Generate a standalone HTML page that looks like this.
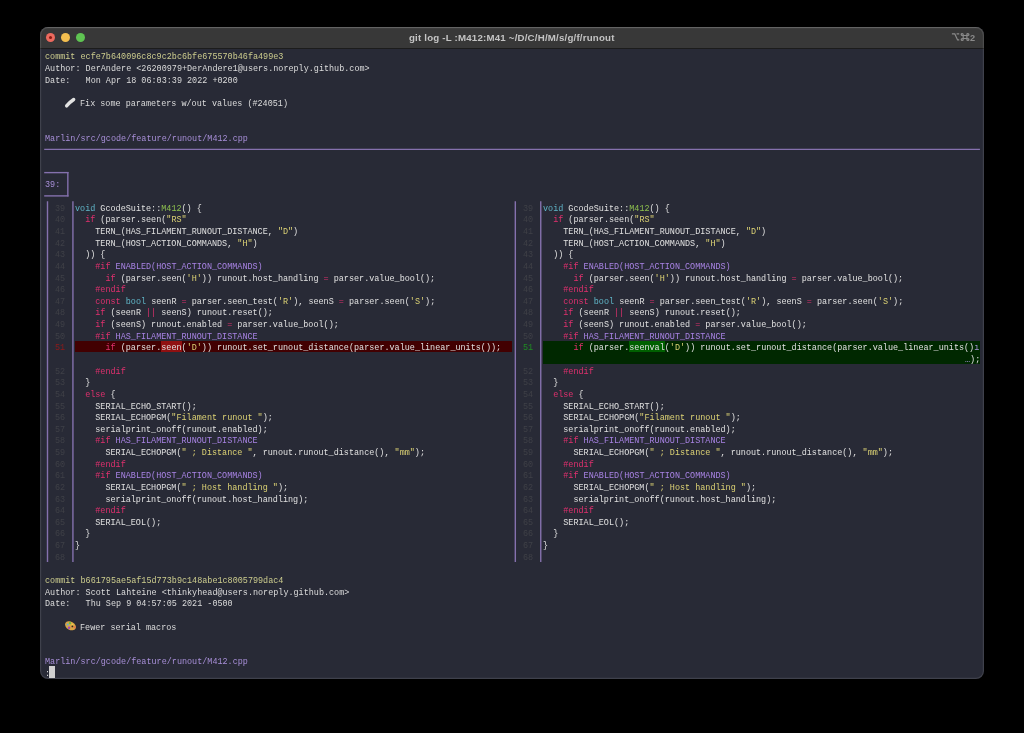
<!DOCTYPE html>
<html><head><meta charset="utf-8"><style>
html,body{margin:0;padding:0;background:#000;width:1024px;height:733px;overflow:hidden}
#win{position:absolute;left:40.4px;top:27.3px;width:943.6px;height:651.9px;border-radius:8px;background:#282a36;overflow:hidden}
#frame{position:absolute;left:40.4px;top:27.3px;width:943.6px;height:651.9px;border-radius:8px;box-shadow:inset 0 0 0 1.2px rgba(255,255,255,0.11)}
#tb{position:absolute;left:0;top:0;right:0;height:20.4px;background:#383838;border-bottom:1px solid #1c1c1c;box-shadow:inset 0 1px 0 rgba(255,255,255,0.12)}
.dot{position:absolute;top:5.9px;width:9px;height:9px;border-radius:50%}
#ttl{position:absolute;will-change:transform;left:0;right:0;top:3.6px;text-align:center;font:bold 9.7px "Liberation Sans",sans-serif;letter-spacing:0.2px;color:#c4c4c4;line-height:14px}
#sc{position:absolute;will-change:transform;right:8px;top:3px;font:bold 9px "Liberation Sans",sans-serif;color:#8c8c8c;line-height:14px}
.r{position:absolute;transform:scaleX(0.85593);transform-origin:0 0;white-space:pre;font-family:"Liberation Mono",monospace;font-size:9.9px;line-height:11.635px;height:11.635px;color:#dcdcdc}
.b{position:absolute}
</style></head><body>

<div id="win"><div id="tb">
<div class="dot" style="left:5.7px;background:#ec6a5e"><div style="position:absolute;left:3px;top:3px;width:3px;height:3px;border-radius:50%;background:#8c1a10"></div></div>
<div class="dot" style="left:20.4px;background:#f4bf4f"></div>
<div class="dot" style="left:35.4px;background:#5fc452"></div>
<div id="ttl">git log -L :M412:M41 ~/D/C/H/M/s/g/f/runout</div>
<svg style="position:absolute;left:910.9px;top:5px" width="26" height="10" viewBox="0 0 26 10"><g stroke="#8a8a8a" stroke-width="1.2" fill="none" stroke-linecap="butt"><path d="M0.9 1.9H3.8L6.6 7.9H8.2M5.6 1.9H8.2"/><path d="M12.2 3.5H15.9V6.5H12.2Z"/><circle cx="11.2" cy="2.5" r="1.0"/><circle cx="16.9" cy="2.5" r="1.0"/><circle cx="11.2" cy="7.5" r="1.0"/><circle cx="16.9" cy="7.5" r="1.0"/></g><text x="19.0" y="8.6" font-family="Liberation Sans" font-weight="bold" font-size="9.2" fill="#8a8a8a">2</text></svg>
</div></div>
<div class="b" style="left:74.81px;top:340.82px;width:437.31px;height:11.63px;background:#420001"></div>
<div class="b" style="left:161.25px;top:340.82px;width:20.34px;height:11.63px;background:#901011"></div>
<div class="b" style="left:542.63px;top:340.82px;width:437.31px;height:23.27px;background:#002800"></div>
<div class="b" style="left:629.07px;top:340.82px;width:35.59px;height:11.63px;background:#006000"></div>
<svg class="b" style="left:0;top:0" width="1024" height="733"><line x1="44.20" y1="149.35" x2="979.94" y2="149.35" stroke="#8571ae" stroke-width="1.40"/><line x1="44.20" y1="172.62" x2="68.54" y2="172.62" stroke="#8571ae" stroke-width="1.40"/><line x1="44.20" y1="195.89" x2="68.54" y2="195.89" stroke="#8571ae" stroke-width="1.40"/><line x1="67.84" y1="171.92" x2="67.84" y2="196.59" stroke="#8571ae" stroke-width="1.40"/><line x1="47.50" y1="201.20" x2="47.50" y2="561.89" stroke="#8571ae" stroke-width="1.40"/><line x1="72.92" y1="201.20" x2="72.92" y2="561.89" stroke="#8571ae" stroke-width="1.40"/><line x1="515.32" y1="201.20" x2="515.32" y2="561.89" stroke="#8571ae" stroke-width="1.40"/><line x1="540.75" y1="201.20" x2="540.75" y2="561.89" stroke="#8571ae" stroke-width="1.40"/></svg>
<div style="position:absolute;left:0;top:0;width:1024px;height:733px;will-change:transform">
<div class="r" style="left:44.70px;top:51.45px"><span style="color:#cdcd8e">commit ecfe7b640096c8c9c2bc6bfe675570b46fa499e3</span></div>
<div class="r" style="left:44.70px;top:63.09px">Author: DerAndere &lt;26200979+DerAndere1@users.noreply.github.com&gt;</div>
<div class="r" style="left:44.70px;top:74.72px">Date:   Mon Apr 18 06:03:39 2022 +0200</div>
<div class="r" style="left:80.30px;top:97.99px">Fix some parameters w/out values (#24051)</div>
<div class="r" style="left:44.70px;top:132.89px"><span style="color:#a88fd8">Marlin/src/gcode/feature/runout/M412.cpp</span></div>
<div class="r" style="left:44.70px;top:179.44px"><span style="color:#a88fd8">39:</span></div>
<div class="r" style="left:44.70px;top:575.03px"><span style="color:#cdcd8e">commit b661795ae5af15d773b9c148abe1c8005799dac4</span></div>
<div class="r" style="left:44.70px;top:586.66px">Author: Scott Lahteine &lt;thinkyhead@users.noreply.github.com&gt;</div>
<div class="r" style="left:44.70px;top:598.30px">Date:   Thu Sep 9 04:57:05 2021 -0500</div>
<div class="r" style="left:80.30px;top:621.57px">Fewer serial macros</div>
<div class="r" style="left:44.70px;top:656.47px"><span style="color:#a88fd8">Marlin/src/gcode/feature/runout/M412.cpp</span></div>
<div class="r" style="left:44.70px;top:668.11px">:</div>
<div class="r" style="left:54.87px;top:202.70px"><span style="color:#3f4047">39</span></div>
<div class="r" style="left:522.69px;top:202.70px"><span style="color:#3f4047">39</span></div>
<div class="r" style="left:75.21px;top:202.70px"><span style="color:#5fb4c6">void</span><span style="color:#e0e0e0"> GcodeSuite::</span><span style="color:#8ec04e">M412</span><span style="color:#e0e0e0">() {</span></div>
<div class="r" style="left:543.03px;top:202.70px"><span style="color:#5fb4c6">void</span><span style="color:#e0e0e0"> GcodeSuite::</span><span style="color:#8ec04e">M412</span><span style="color:#e0e0e0">() {</span></div>
<div class="r" style="left:54.87px;top:214.34px"><span style="color:#3f4047">40</span></div>
<div class="r" style="left:522.69px;top:214.34px"><span style="color:#3f4047">40</span></div>
<div class="r" style="left:75.21px;top:214.34px"><span style="color:#e0e0e0">  </span><span style="color:#e0306e">if</span><span style="color:#e0e0e0"> (parser.seen(</span><span style="color:#dcd274">&quot;RS&quot;</span></div>
<div class="r" style="left:543.03px;top:214.34px"><span style="color:#e0e0e0">  </span><span style="color:#e0306e">if</span><span style="color:#e0e0e0"> (parser.seen(</span><span style="color:#dcd274">&quot;RS&quot;</span></div>
<div class="r" style="left:54.87px;top:225.98px"><span style="color:#3f4047">41</span></div>
<div class="r" style="left:522.69px;top:225.98px"><span style="color:#3f4047">41</span></div>
<div class="r" style="left:75.21px;top:225.98px"><span style="color:#e0e0e0">    TERN_(HAS_FILAMENT_RUNOUT_DISTANCE, </span><span style="color:#dcd274">&quot;D&quot;</span><span style="color:#e0e0e0">)</span></div>
<div class="r" style="left:543.03px;top:225.98px"><span style="color:#e0e0e0">    TERN_(HAS_FILAMENT_RUNOUT_DISTANCE, </span><span style="color:#dcd274">&quot;D&quot;</span><span style="color:#e0e0e0">)</span></div>
<div class="r" style="left:54.87px;top:237.61px"><span style="color:#3f4047">42</span></div>
<div class="r" style="left:522.69px;top:237.61px"><span style="color:#3f4047">42</span></div>
<div class="r" style="left:75.21px;top:237.61px"><span style="color:#e0e0e0">    TERN_(HOST_ACTION_COMMANDS, </span><span style="color:#dcd274">&quot;H&quot;</span><span style="color:#e0e0e0">)</span></div>
<div class="r" style="left:543.03px;top:237.61px"><span style="color:#e0e0e0">    TERN_(HOST_ACTION_COMMANDS, </span><span style="color:#dcd274">&quot;H&quot;</span><span style="color:#e0e0e0">)</span></div>
<div class="r" style="left:54.87px;top:249.25px"><span style="color:#3f4047">43</span></div>
<div class="r" style="left:522.69px;top:249.25px"><span style="color:#3f4047">43</span></div>
<div class="r" style="left:75.21px;top:249.25px"><span style="color:#e0e0e0">  )) {</span></div>
<div class="r" style="left:543.03px;top:249.25px"><span style="color:#e0e0e0">  )) {</span></div>
<div class="r" style="left:54.87px;top:260.88px"><span style="color:#3f4047">44</span></div>
<div class="r" style="left:522.69px;top:260.88px"><span style="color:#3f4047">44</span></div>
<div class="r" style="left:75.21px;top:260.88px"><span style="color:#e0e0e0">    </span><span style="color:#e0306e">#if</span><span style="color:#a883e4"> ENABLED(HOST_ACTION_COMMANDS)</span></div>
<div class="r" style="left:543.03px;top:260.88px"><span style="color:#e0e0e0">    </span><span style="color:#e0306e">#if</span><span style="color:#a883e4"> ENABLED(HOST_ACTION_COMMANDS)</span></div>
<div class="r" style="left:54.87px;top:272.51px"><span style="color:#3f4047">45</span></div>
<div class="r" style="left:522.69px;top:272.51px"><span style="color:#3f4047">45</span></div>
<div class="r" style="left:75.21px;top:272.51px"><span style="color:#e0e0e0">      </span><span style="color:#e0306e">if</span><span style="color:#e0e0e0"> (parser.seen(</span><span style="color:#dcd274">&#x27;H&#x27;</span><span style="color:#e0e0e0">)) runout.host_handling </span><span style="color:#e0306e">=</span><span style="color:#e0e0e0"> parser.value_bool();</span></div>
<div class="r" style="left:543.03px;top:272.51px"><span style="color:#e0e0e0">      </span><span style="color:#e0306e">if</span><span style="color:#e0e0e0"> (parser.seen(</span><span style="color:#dcd274">&#x27;H&#x27;</span><span style="color:#e0e0e0">)) runout.host_handling </span><span style="color:#e0306e">=</span><span style="color:#e0e0e0"> parser.value_bool();</span></div>
<div class="r" style="left:54.87px;top:284.15px"><span style="color:#3f4047">46</span></div>
<div class="r" style="left:522.69px;top:284.15px"><span style="color:#3f4047">46</span></div>
<div class="r" style="left:75.21px;top:284.15px"><span style="color:#e0e0e0">    </span><span style="color:#e0306e">#endif</span></div>
<div class="r" style="left:543.03px;top:284.15px"><span style="color:#e0e0e0">    </span><span style="color:#e0306e">#endif</span></div>
<div class="r" style="left:54.87px;top:295.79px"><span style="color:#3f4047">47</span></div>
<div class="r" style="left:522.69px;top:295.79px"><span style="color:#3f4047">47</span></div>
<div class="r" style="left:75.21px;top:295.79px"><span style="color:#e0e0e0">    </span><span style="color:#e0306e">const</span><span style="color:#e0e0e0"> </span><span style="color:#5fb4c6">bool</span><span style="color:#e0e0e0"> seenR </span><span style="color:#e0306e">=</span><span style="color:#e0e0e0"> parser.seen_test(</span><span style="color:#dcd274">&#x27;R&#x27;</span><span style="color:#e0e0e0">), seenS </span><span style="color:#e0306e">=</span><span style="color:#e0e0e0"> parser.seen(</span><span style="color:#dcd274">&#x27;S&#x27;</span><span style="color:#e0e0e0">);</span></div>
<div class="r" style="left:543.03px;top:295.79px"><span style="color:#e0e0e0">    </span><span style="color:#e0306e">const</span><span style="color:#e0e0e0"> </span><span style="color:#5fb4c6">bool</span><span style="color:#e0e0e0"> seenR </span><span style="color:#e0306e">=</span><span style="color:#e0e0e0"> parser.seen_test(</span><span style="color:#dcd274">&#x27;R&#x27;</span><span style="color:#e0e0e0">), seenS </span><span style="color:#e0306e">=</span><span style="color:#e0e0e0"> parser.seen(</span><span style="color:#dcd274">&#x27;S&#x27;</span><span style="color:#e0e0e0">);</span></div>
<div class="r" style="left:54.87px;top:307.42px"><span style="color:#3f4047">48</span></div>
<div class="r" style="left:522.69px;top:307.42px"><span style="color:#3f4047">48</span></div>
<div class="r" style="left:75.21px;top:307.42px"><span style="color:#e0e0e0">    </span><span style="color:#e0306e">if</span><span style="color:#e0e0e0"> (seenR </span><span style="color:#e0306e">||</span><span style="color:#e0e0e0"> seenS) runout.reset();</span></div>
<div class="r" style="left:543.03px;top:307.42px"><span style="color:#e0e0e0">    </span><span style="color:#e0306e">if</span><span style="color:#e0e0e0"> (seenR </span><span style="color:#e0306e">||</span><span style="color:#e0e0e0"> seenS) runout.reset();</span></div>
<div class="r" style="left:54.87px;top:319.06px"><span style="color:#3f4047">49</span></div>
<div class="r" style="left:522.69px;top:319.06px"><span style="color:#3f4047">49</span></div>
<div class="r" style="left:75.21px;top:319.06px"><span style="color:#e0e0e0">    </span><span style="color:#e0306e">if</span><span style="color:#e0e0e0"> (seenS) runout.enabled </span><span style="color:#e0306e">=</span><span style="color:#e0e0e0"> parser.value_bool();</span></div>
<div class="r" style="left:543.03px;top:319.06px"><span style="color:#e0e0e0">    </span><span style="color:#e0306e">if</span><span style="color:#e0e0e0"> (seenS) runout.enabled </span><span style="color:#e0306e">=</span><span style="color:#e0e0e0"> parser.value_bool();</span></div>
<div class="r" style="left:54.87px;top:330.69px"><span style="color:#3f4047">50</span></div>
<div class="r" style="left:522.69px;top:330.69px"><span style="color:#3f4047">50</span></div>
<div class="r" style="left:75.21px;top:330.69px"><span style="color:#e0e0e0">    </span><span style="color:#e0306e">#if</span><span style="color:#a883e4"> HAS_FILAMENT_RUNOUT_DISTANCE</span></div>
<div class="r" style="left:543.03px;top:330.69px"><span style="color:#e0e0e0">    </span><span style="color:#e0306e">#if</span><span style="color:#a883e4"> HAS_FILAMENT_RUNOUT_DISTANCE</span></div>
<div class="r" style="left:54.87px;top:342.32px"><span style="color:#8f1a1a">51</span></div>
<div class="r" style="left:522.69px;top:342.32px"><span style="color:#1f8c22">51</span></div>
<div class="r" style="left:75.21px;top:342.32px"><span style="color:#e0e0e0">      </span><span style="color:#e0306e">if</span><span style="color:#e0e0e0"> (parser.</span><span style="color:#e0e0e0">seen</span><span style="color:#e0e0e0">(</span><span style="color:#dcd274">&#x27;D&#x27;</span><span style="color:#e0e0e0">)) runout.set_runout_distance(parser.value_linear_units());</span></div>
<div class="r" style="left:543.03px;top:342.32px"><span style="color:#e0e0e0">      </span><span style="color:#e0306e">if</span><span style="color:#e0e0e0"> (parser.</span><span style="color:#e0e0e0">seenval</span><span style="color:#e0e0e0">(</span><span style="color:#dcd274">&#x27;D&#x27;</span><span style="color:#e0e0e0">)) runout.set_runout_distance(parser.value_linear_units()</span><span style="color:#a596d6">ı</span></div>
<div class="r" style="left:965.08px;top:353.96px"><span style="color:#a596d6">…</span><span style="color:#e0e0e0">);</span></div>
<div class="r" style="left:54.87px;top:365.59px"><span style="color:#3f4047">52</span></div>
<div class="r" style="left:522.69px;top:365.59px"><span style="color:#3f4047">52</span></div>
<div class="r" style="left:75.21px;top:365.59px"><span style="color:#e0e0e0">    </span><span style="color:#e0306e">#endif</span></div>
<div class="r" style="left:543.03px;top:365.59px"><span style="color:#e0e0e0">    </span><span style="color:#e0306e">#endif</span></div>
<div class="r" style="left:54.87px;top:377.23px"><span style="color:#3f4047">53</span></div>
<div class="r" style="left:522.69px;top:377.23px"><span style="color:#3f4047">53</span></div>
<div class="r" style="left:75.21px;top:377.23px"><span style="color:#e0e0e0">  }</span></div>
<div class="r" style="left:543.03px;top:377.23px"><span style="color:#e0e0e0">  }</span></div>
<div class="r" style="left:54.87px;top:388.87px"><span style="color:#3f4047">54</span></div>
<div class="r" style="left:522.69px;top:388.87px"><span style="color:#3f4047">54</span></div>
<div class="r" style="left:75.21px;top:388.87px"><span style="color:#e0e0e0">  </span><span style="color:#e0306e">else</span><span style="color:#e0e0e0"> {</span></div>
<div class="r" style="left:543.03px;top:388.87px"><span style="color:#e0e0e0">  </span><span style="color:#e0306e">else</span><span style="color:#e0e0e0"> {</span></div>
<div class="r" style="left:54.87px;top:400.50px"><span style="color:#3f4047">55</span></div>
<div class="r" style="left:522.69px;top:400.50px"><span style="color:#3f4047">55</span></div>
<div class="r" style="left:75.21px;top:400.50px"><span style="color:#e0e0e0">    SERIAL_ECHO_START();</span></div>
<div class="r" style="left:543.03px;top:400.50px"><span style="color:#e0e0e0">    SERIAL_ECHO_START();</span></div>
<div class="r" style="left:54.87px;top:412.13px"><span style="color:#3f4047">56</span></div>
<div class="r" style="left:522.69px;top:412.13px"><span style="color:#3f4047">56</span></div>
<div class="r" style="left:75.21px;top:412.13px"><span style="color:#e0e0e0">    SERIAL_ECHOPGM(</span><span style="color:#dcd274">&quot;Filament runout &quot;</span><span style="color:#e0e0e0">);</span></div>
<div class="r" style="left:543.03px;top:412.13px"><span style="color:#e0e0e0">    SERIAL_ECHOPGM(</span><span style="color:#dcd274">&quot;Filament runout &quot;</span><span style="color:#e0e0e0">);</span></div>
<div class="r" style="left:54.87px;top:423.77px"><span style="color:#3f4047">57</span></div>
<div class="r" style="left:522.69px;top:423.77px"><span style="color:#3f4047">57</span></div>
<div class="r" style="left:75.21px;top:423.77px"><span style="color:#e0e0e0">    serialprint_onoff(runout.enabled);</span></div>
<div class="r" style="left:543.03px;top:423.77px"><span style="color:#e0e0e0">    serialprint_onoff(runout.enabled);</span></div>
<div class="r" style="left:54.87px;top:435.40px"><span style="color:#3f4047">58</span></div>
<div class="r" style="left:522.69px;top:435.40px"><span style="color:#3f4047">58</span></div>
<div class="r" style="left:75.21px;top:435.40px"><span style="color:#e0e0e0">    </span><span style="color:#e0306e">#if</span><span style="color:#a883e4"> HAS_FILAMENT_RUNOUT_DISTANCE</span></div>
<div class="r" style="left:543.03px;top:435.40px"><span style="color:#e0e0e0">    </span><span style="color:#e0306e">#if</span><span style="color:#a883e4"> HAS_FILAMENT_RUNOUT_DISTANCE</span></div>
<div class="r" style="left:54.87px;top:447.04px"><span style="color:#3f4047">59</span></div>
<div class="r" style="left:522.69px;top:447.04px"><span style="color:#3f4047">59</span></div>
<div class="r" style="left:75.21px;top:447.04px"><span style="color:#e0e0e0">      SERIAL_ECHOPGM(</span><span style="color:#dcd274">&quot; ; Distance &quot;</span><span style="color:#e0e0e0">, runout.runout_distance(), </span><span style="color:#dcd274">&quot;mm&quot;</span><span style="color:#e0e0e0">);</span></div>
<div class="r" style="left:543.03px;top:447.04px"><span style="color:#e0e0e0">      SERIAL_ECHOPGM(</span><span style="color:#dcd274">&quot; ; Distance &quot;</span><span style="color:#e0e0e0">, runout.runout_distance(), </span><span style="color:#dcd274">&quot;mm&quot;</span><span style="color:#e0e0e0">);</span></div>
<div class="r" style="left:54.87px;top:458.67px"><span style="color:#3f4047">60</span></div>
<div class="r" style="left:522.69px;top:458.67px"><span style="color:#3f4047">60</span></div>
<div class="r" style="left:75.21px;top:458.67px"><span style="color:#e0e0e0">    </span><span style="color:#e0306e">#endif</span></div>
<div class="r" style="left:543.03px;top:458.67px"><span style="color:#e0e0e0">    </span><span style="color:#e0306e">#endif</span></div>
<div class="r" style="left:54.87px;top:470.31px"><span style="color:#3f4047">61</span></div>
<div class="r" style="left:522.69px;top:470.31px"><span style="color:#3f4047">61</span></div>
<div class="r" style="left:75.21px;top:470.31px"><span style="color:#e0e0e0">    </span><span style="color:#e0306e">#if</span><span style="color:#a883e4"> ENABLED(HOST_ACTION_COMMANDS)</span></div>
<div class="r" style="left:543.03px;top:470.31px"><span style="color:#e0e0e0">    </span><span style="color:#e0306e">#if</span><span style="color:#a883e4"> ENABLED(HOST_ACTION_COMMANDS)</span></div>
<div class="r" style="left:54.87px;top:481.94px"><span style="color:#3f4047">62</span></div>
<div class="r" style="left:522.69px;top:481.94px"><span style="color:#3f4047">62</span></div>
<div class="r" style="left:75.21px;top:481.94px"><span style="color:#e0e0e0">      SERIAL_ECHOPGM(</span><span style="color:#dcd274">&quot; ; Host handling &quot;</span><span style="color:#e0e0e0">);</span></div>
<div class="r" style="left:543.03px;top:481.94px"><span style="color:#e0e0e0">      SERIAL_ECHOPGM(</span><span style="color:#dcd274">&quot; ; Host handling &quot;</span><span style="color:#e0e0e0">);</span></div>
<div class="r" style="left:54.87px;top:493.58px"><span style="color:#3f4047">63</span></div>
<div class="r" style="left:522.69px;top:493.58px"><span style="color:#3f4047">63</span></div>
<div class="r" style="left:75.21px;top:493.58px"><span style="color:#e0e0e0">      serialprint_onoff(runout.host_handling);</span></div>
<div class="r" style="left:543.03px;top:493.58px"><span style="color:#e0e0e0">      serialprint_onoff(runout.host_handling);</span></div>
<div class="r" style="left:54.87px;top:505.21px"><span style="color:#3f4047">64</span></div>
<div class="r" style="left:522.69px;top:505.21px"><span style="color:#3f4047">64</span></div>
<div class="r" style="left:75.21px;top:505.21px"><span style="color:#e0e0e0">    </span><span style="color:#e0306e">#endif</span></div>
<div class="r" style="left:543.03px;top:505.21px"><span style="color:#e0e0e0">    </span><span style="color:#e0306e">#endif</span></div>
<div class="r" style="left:54.87px;top:516.85px"><span style="color:#3f4047">65</span></div>
<div class="r" style="left:522.69px;top:516.85px"><span style="color:#3f4047">65</span></div>
<div class="r" style="left:75.21px;top:516.85px"><span style="color:#e0e0e0">    SERIAL_EOL();</span></div>
<div class="r" style="left:543.03px;top:516.85px"><span style="color:#e0e0e0">    SERIAL_EOL();</span></div>
<div class="r" style="left:54.87px;top:528.49px"><span style="color:#3f4047">66</span></div>
<div class="r" style="left:522.69px;top:528.49px"><span style="color:#3f4047">66</span></div>
<div class="r" style="left:75.21px;top:528.49px"><span style="color:#e0e0e0">  }</span></div>
<div class="r" style="left:543.03px;top:528.49px"><span style="color:#e0e0e0">  }</span></div>
<div class="r" style="left:54.87px;top:540.12px"><span style="color:#3f4047">67</span></div>
<div class="r" style="left:522.69px;top:540.12px"><span style="color:#3f4047">67</span></div>
<div class="r" style="left:75.21px;top:540.12px"><span style="color:#e0e0e0">}</span></div>
<div class="r" style="left:543.03px;top:540.12px"><span style="color:#e0e0e0">}</span></div>
<div class="r" style="left:54.87px;top:551.75px"><span style="color:#3f4047">68</span></div>
<div class="r" style="left:522.69px;top:551.75px"><span style="color:#3f4047">68</span></div>
</div>
<div class="b" style="left:49.30px;top:666.00px;width:5.40px;height:11.90px;background:#d0d0d0"></div>
<svg class="b" style="left:62px;top:95px" width="16" height="16" viewBox="0 0 16 16"><path d="M4.6 10.9 Q7.6 7.2 11.7 4.5" stroke="#e2e2e2" stroke-width="3.3" stroke-linecap="round" fill="none"/></svg>
<svg class="b" style="left:62px;top:618px" width="16" height="16" viewBox="0 0 16 16">
<g transform="rotate(28 8.5 7.8)"><ellipse cx="8.5" cy="7.8" rx="5.8" ry="4.1" fill="#d8a545"/></g>
<circle cx="5.7" cy="6.5" r="1.1" fill="#5aaee0"/><circle cx="7.9" cy="5.2" r="1.1" fill="#5cc040"/>
<circle cx="10.4" cy="6.6" r="1.0" fill="#f0d050"/><circle cx="10.4" cy="8.4" r="0.9" fill="#2a2520"/>
<circle cx="12.6" cy="9.3" r="1.0" fill="#e86a50"/><circle cx="7.1" cy="9.7" r="1.2" fill="#9a40c8"/>
</svg>
<div id="frame"></div>
</body></html>
